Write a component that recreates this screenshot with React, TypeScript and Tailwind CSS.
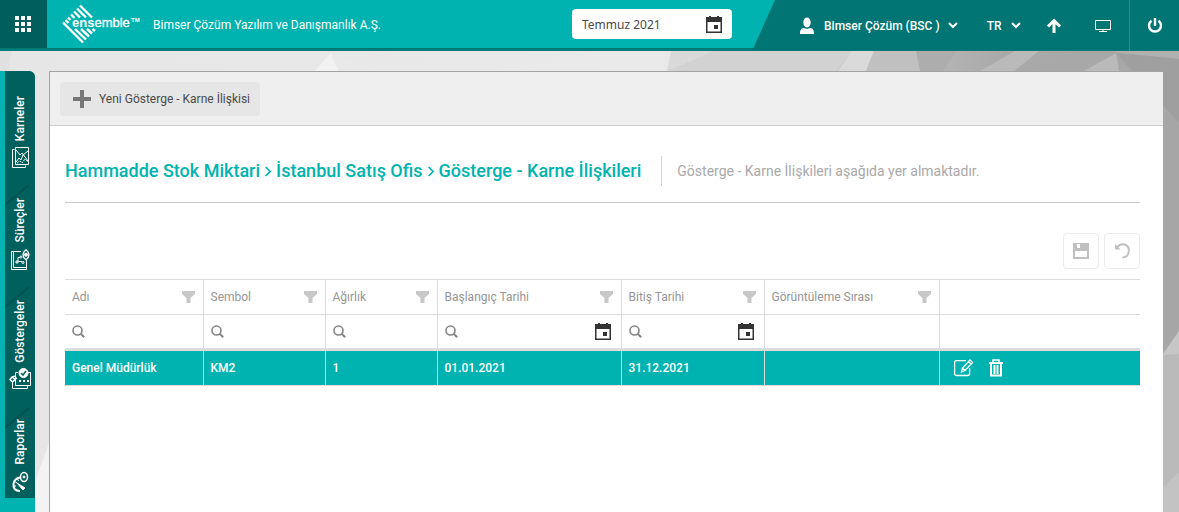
import { useState } from 'react';
import type { ReactNode } from 'react';

const COLUMNS = [
  { key: 'name', label: 'Adı', width: 'w-[138px]', search: true, date: false },
  { key: 'symbol', label: 'Sembol', width: 'w-[122px]', search: true, date: false },
  { key: 'weight', label: 'Ağırlık', width: 'w-[112px]', search: true, date: false },
  { key: 'start', label: 'Başlangıç Tarihi', width: 'w-[184px]', search: true, date: true },
  { key: 'end', label: 'Bitiş Tarihi', width: 'w-[143px]', search: true, date: true },
  { key: 'order', label: 'Görüntüleme Sırası', width: 'w-[175px]', search: false, date: false },
];

const ROWS: Record<string, string>[] = [
  { name: 'Genel Müdürlük', symbol: 'KM2', weight: '1', start: '01.01.2021', end: '31.12.2021', order: '' },
];

function Backdrop() {
  return (
    <svg
      className="absolute inset-0 h-full w-full"
      viewBox="0 0 1179 512"
      preserveAspectRatio="none"
      aria-hidden="true"
    >
      <defs>
        <linearGradient id="bg" x1="0" x2="1" y1="0" y2="0">
          <stop offset="0" stopColor="#e6e6e6" />
          <stop offset="0.56" stopColor="#eaeaea" />
          <stop offset="0.68" stopColor="#cfcfcf" />
          <stop offset="0.85" stopColor="#a9a9a9" />
          <stop offset="1" stopColor="#a6a6a6" />
        </linearGradient>
      </defs>
      <rect width="1179" height="512" fill="url(#bg)" />
      <path d="M0 51h12L0 110z" fill="#e0e0e0" />
      <path d="M331 53l-18 20h26z" fill="#f2f2f2" />
      <path d="M331 53l8 20h48z" fill="#e9e9e9" />
      <path d="M671 51h42l-46 20z" fill="#d9d9d9" />
      <path d="M713 51h140l-17 20H667z" fill="#d2d2d2" />
      <path d="M852 51h22l-8 20h-28z" fill="#dadada" />
      <path d="M874 51h42l4 20h-54z" fill="#c0c0c0" />
      <path d="M916 51h41l-14 20h-23z" fill="#adadad" />
      <path d="M1015 51h24l-25 20h-34z" fill="#bababa" />
      <path d="M1116 53l-32 18h35z" fill="#bababa" />
      <path d="M1116 51h63v8l-63-6z" fill="#b0b0b0" />
      <path d="M1116 53l63 6v64z" fill="#9f9f9f" />
      <path d="M1179 331l-16 22v159h16z" fill="#bababa" />
      <path d="M1179 331l-16 24 16-1z" fill="#c6c6c6" />
      <path d="M1179 472l-16 15v25h16z" fill="#c3c3c3" />
      <path d="M50 440l-15 42v30h15z" fill="#f3f3f3" />
    </svg>
  );
}

function Logo() {
  return (
    <svg width="78" height="40" viewBox="0 0 78 40" role="img" aria-label="ensemble">
      <g stroke="#fff" strokeWidth="2.400" fill="none">
        <path d="M18 1.500l12 12M15 4.500l9 9M12 7.500l6 6M9 10.500l3.500 3.500M6 13.500l2.500 2.500M3.500 16l3 3M1 18.500l20 20" />
        <path d="M13 25l11 10.500M19 25l8 7.500M25 25l5 4.500M30.500 25l2.500 2" />
      </g>
      <text x="10" y="23" fill="#fff" fontFamily="Liberation Sans, Arial, sans-serif" fontSize="13" fontWeight="700">
        ens
        <tspan fontWeight="400" stroke="#fff" strokeWidth="0.300">emble</tspan>
      </text>
      <text x="69" y="18" fill="#fff" fontFamily="Liberation Sans, Arial, sans-serif" fontSize="6" fontWeight="700">TM</text>
    </svg>
  );
}

function CalendarIcon() {
  return (
    <svg width="16" height="17" viewBox="0 0 16 17" fill="#333">
      <path fillRule="evenodd" d="M0 1h3V0h2v1h6V0h2v1h3v16H0zM1.500 6v9.500h13V6z" />
      <path d="M8 9h4v4H8z" />
    </svg>
  );
}

function SearchIcon() {
  return (
    <svg width="13" height="13" viewBox="0 0 13 13" fill="none" stroke="#858585">
      <circle cx="5.500" cy="5.500" r="4.500" strokeWidth="1.600" />
      <path d="M8.700 8.700l3.500 3.500" strokeWidth="2" />
    </svg>
  );
}

function FilterIcon() {
  return (
    <svg width="13" height="12" viewBox="0 0 13 12" fill="#c8c8c8">
      <path d="M0 0h13v3L8.500 7v5h-4V7L0 3z" />
    </svg>
  );
}

function ChevronIcon() {
  return (
    <svg width="10" height="7" viewBox="0 0 10 7" fill="none" stroke="#fff" strokeWidth="2">
      <path d="M1 1l4 4 4-4" />
    </svg>
  );
}

function CrumbArrow() {
  return (
    <svg className="mx-[5px]" width="6" height="11" viewBox="0 0 6 11" fill="none" stroke="#00b3b0" strokeWidth="1.700">
      <path d="M.7 1L5 5.500.7 10" />
    </svg>
  );
}

function CardsIcon() {
  return (
    <svg width="17" height="21" viewBox="0 0 17 21" fill="none" stroke="#fff">
      <path d="M3.500.5h13v17h-13zM2.500 2.500h-2v18h13v-2" />
      <path d="M4 15l3-4 2 2 2-5 5-4M4 3l4 5 2-2 6 8" />
      <path d="M5 16l3-2 2 2 3-4 3 3" strokeDasharray="2 1" />
    </svg>
  );
}

function ProcessIcon() {
  return (
    <svg width="19" height="21" viewBox="0 0 19 21" fill="none" stroke="#fff">
      <path d="M10 2.500H.5v18h15V11M2.500 2v16.500H15" />
      <path d="M7 12.500V8.500h2M7.500 12.500H11M5 12h2v2H5z" />
      <circle cx="10" cy="8" r="1" />
      <circle cx="12" cy="13.500" r="1" />
      <path d="M15 .7c2 1.500 3 3 3 5s-1 3.500-3 5c-2-1.500-3-3-3-5s1-3.500 3-5z" strokeWidth="1.300" />
      <circle cx="15" cy="5.700" r="1.500" fill="#fff" />
    </svg>
  );
}

function IndicatorIcon() {
  return (
    <svg width="22" height="21" viewBox="0 0 22 21" fill="none" stroke="#fff">
      <path d="M9 4.500H6.500v13h15v-13h-3M3.500 13v7.500h15v-3" />
      <circle cx="14.500" cy="5" r="4.500" fill="#fff" />
      <path d="M12 5l2 2 3-4" stroke="#00605d" strokeWidth="1.500" />
      <path d="M1 11.500l2-2.500 3 2.500-2.500 2.500zM3 9l4-1M6 11l2-1" strokeWidth="1.500" />
      <path d="M10 13h10" strokeWidth="2" strokeDasharray="2 2" />
    </svg>
  );
}

function ReportIcon() {
  return (
    <svg width="17" height="21" viewBox="0 0 17 21" fill="none" stroke="#fff">
      <path d="M8 20C3 20 1 17 1.500 13S5 7 8 6.500" strokeWidth="2" />
      <path d="M2 10l3 2M1 15h3M5 7l1.500 3" />
      <path d="M5 12l8 5-2 2z" fill="#fff" />
      <ellipse cx="12" cy="6" rx="3.500" ry="4.500" strokeWidth="1.500" />
      <circle cx="12" cy="6" r="1" fill="#fff" />
    </svg>
  );
}

const TABS: { label: string; icon: ReactNode }[] = [
  { label: 'Karneler', icon: <CardsIcon /> },
  { label: 'Süreçler', icon: <ProcessIcon /> },
  { label: 'Göstergeler', icon: <IndicatorIcon /> },
  { label: 'Raporlar', icon: <ReportIcon /> },
];

function Header() {
  const [period, setPeriod] = useState('Temmuz 2021');

  return (
    <header className="relative flex h-[51px] border-b-[3px] border-[#007a77] bg-[#00b3b0] text-xs text-white">
      <button type="button" aria-label="Menü" className="flex w-[47px] items-center justify-center bg-[#005f5c]">
        <svg width="17" height="17" viewBox="0 0 17 17" fill="#fff">
          <path d="M0 0h4v4H0zM6 0h4v4H6zM12 0h4v4h-4zM0 6h4v4H0zM6 6h4v4H6zM12 6h4v4h-4zM0 12h4v4H0zM6 12h4v4H6zM12 12h4v4h-4z" />
        </svg>
      </button>
      <div className="flex flex-1 items-center pl-[15px]">
        <Logo />
        <span className="ml-[13px] pt-[2px]">Bimser Çözüm Yazılım ve Danışmanlık A.Ş.</span>
      </div>
      <div className="my-auto mr-5 flex h-[30px] w-40 items-center rounded-sm bg-white px-[10px]">
        <input
          aria-label="Dönem"
          value={period}
          onChange={(e) => setPeriod(e.target.value)}
          className="min-w-0 flex-1 pt-px font-['Noto_Sans',sans-serif] text-xs text-[#4a4a4a] outline-none"
        />
        <button type="button" aria-label="Takvim">
          <CalendarIcon />
        </button>
      </div>
      <div className="-mb-[3px] flex w-[427px] bg-[#007573] [clip-path:polygon(23px_0,100%_0,100%_100%,0_100%)]">
        <button type="button" className="ml-12 flex items-center text-xs font-medium">
          <svg width="14" height="18" viewBox="0 0 14 18" fill="#fff">
            <ellipse cx="7" cy="5.500" rx="3.700" ry="5" />
            <path d="M0 17c0-4 1-6 4-6l3 1 3-1c3 0 4 2 4 6z" />
          </svg>
          <span className="mr-2 ml-[10px]">Bimser Çözüm (BSC )</span>
          <ChevronIcon />
        </button>
        <button type="button" className="ml-[29px] flex items-center gap-[9px] text-xs font-medium">
          TR
          <ChevronIcon />
        </button>
        <button type="button" aria-label="Yukarı" className="ml-[25px]">
          <svg width="16" height="16" viewBox="0 0 16 16" fill="none" stroke="#fff" strokeWidth="3">
            <path d="M8 15V2M2 8.500L8 2.500l6 6" />
          </svg>
        </button>
        <button type="button" aria-label="Ekran" className="ml-[33px]">
          <svg width="16" height="14" viewBox="0 0 16 14" fill="none" stroke="#fff">
            <path d="M.5 1.500h15v9H.5zM8 10.500v2M4 12.500h8" />
          </svg>
        </button>
        <button type="button" aria-label="Çıkış" className="ml-auto flex w-[50px] items-center justify-center border-l border-[#00a19e]">
          <svg width="16" height="16" viewBox="0 0 16 16" fill="none" stroke="#fff" strokeWidth="2.400">
            <path d="M8 0v8M4.500 2.700a6 6 0 1 0 7 0" />
          </svg>
        </button>
      </div>
    </header>
  );
}

function SideTabs() {
  return (
    <nav className="flex w-[35px] flex-col rounded-tr-md bg-[#00b3b0] pl-[5px]">
      <div className="relative flex flex-col items-center gap-[30px] rounded-tr-md bg-[#00605d] pt-[25px] pb-[6px]">
        <svg className="absolute inset-0 h-full w-full" viewBox="0 0 30 427" fill="none" stroke="#005350" strokeWidth="2" aria-hidden="true">
          <path d="M0 134l24-20M0 236l24-20M0 357l24-20" />
        </svg>
        {TABS.map((tab) => (
          <button key={tab.label} type="button" className="relative flex flex-col items-center gap-[6px]">
            <span className="rotate-180 text-xs leading-4 font-medium text-white [writing-mode:vertical-rl]">
              {tab.label}
            </span>
            {tab.icon}
          </button>
        ))}
      </div>
    </nav>
  );
}

function IndicatorTable() {
  const [filters, setFilters] = useState<Record<string, string>>({});

  return (
    <table className="mt-[10px] w-full table-fixed border-collapse text-left text-xs">
      <thead>
        <tr className="h-[35px] border-y border-[#dcdcdc] text-[#959595]">
          {COLUMNS.map((col) => (
            <th key={col.key} className={`${col.width} border-r border-[#dcdcdc] py-0 pr-2 pl-[7px] font-normal`}>
              <div className="flex items-center justify-between">
                {col.label}
                <button type="button" aria-label={`${col.label} filtrele`}>
                  <FilterIcon />
                </button>
              </div>
            </th>
          ))}
          <th aria-label="İşlemler" />
        </tr>
        <tr className="h-[35px] border-b-[3px] border-[#dcdcdc]">
          {COLUMNS.map((col) => (
            <td key={col.key} className="border-r border-[#dcdcdc] py-0 pr-2 pl-[7px]">
              {col.search && (
                <div className="flex items-center gap-1">
                  <SearchIcon />
                  <input
                    aria-label={`${col.label} ara`}
                    value={filters[col.key] ?? ''}
                    onChange={(e) => setFilters({ ...filters, [col.key]: e.target.value })}
                    className="h-5 min-w-0 flex-1 outline-none"
                  />
                  {col.date && (
                    <button type="button" aria-label={`${col.label} seç`} className="mr-[2px]">
                      <CalendarIcon />
                    </button>
                  )}
                </div>
              )}
            </td>
          ))}
          <td />
        </tr>
      </thead>
      <tbody>
        {ROWS.map((row) => (
          <tr key={row.name} className="h-9 border-b border-[#dcdcdc] bg-[#00b3b0] font-medium text-white">
            {COLUMNS.map((col) => (
              <td key={col.key} className="border-r border-[#dcdcdc] px-[7px] py-0">
                {row[col.key]}
              </td>
            ))}
            <td className="py-0 pl-[14px]">
              <div className="flex items-center gap-4">
                <button type="button" aria-label="Düzenle">
                  <svg width="19" height="18" viewBox="0 0 19 18" fill="none" stroke="#fff" strokeWidth="1.300">
                    <path d="M12 1.600H2.500Q.6 1.600.6 3.500v11q0 2 2 2h11q2 0 2-2V9" />
                    <path d="M7.500 13l1-4L16 1l2.500 2.500-7.500 8zM14.500 2.500L17 5M8.500 9l2.500 2.500" />
                  </svg>
                </button>
                <button type="button" aria-label="Sil">
                  <svg width="14" height="18" viewBox="0 0 14 18" fill="none" stroke="#fff">
                    <path d="M4 3V1h6v2" strokeWidth="1.500" />
                    <path d="M0 4h14" strokeWidth="2" />
                    <path d="M2 5v11.500h10V5M5.500 6v9M8.500 6v9" strokeWidth="2" />
                  </svg>
                </button>
              </div>
            </td>
          </tr>
        ))}
      </tbody>
    </table>
  );
}

function App() {
  return (
    <div className="relative isolate flex min-h-screen flex-col font-[Roboto,sans-serif]">
      <div className="absolute inset-0 -z-10">
        <Backdrop />
      </div>
      <Header />
      <div className="mt-5 flex flex-1">
        <SideTabs />
        <main className="mr-4 ml-[14px] flex-1 border-t border-l border-[#a3a3a3] bg-white">
          <div className="flex h-[54px] items-center border-b border-[#cfcfcf] bg-[#efefef] pl-[10px]">
            <button type="button" className="flex h-[34px] w-[200px] items-center rounded bg-[#e6e6e6] pl-[13px] text-xs text-[#4a4a4a]">
              <svg width="18" height="18" viewBox="0 0 18 18" stroke="#777" strokeWidth="4">
                <path d="M9 0v18M0 9h18" />
              </svg>
              <span className="ml-2">Yeni Gösterge - Karne İlişkisi</span>
            </button>
          </div>
          <div className="pr-[23px] pl-[15px]">
            <div className="flex h-[77px] items-center border-b border-[#c8c8c8] pt-[14px]">
              <h1 className="flex items-center text-lg font-medium whitespace-nowrap text-[#00b3b0]">
                Hammadde Stok Miktari
                <CrumbArrow />
                İstanbul Satış Ofis
                <CrumbArrow />
                Gösterge - Karne İlişkileri
              </h1>
              <p className="ml-5 border-l border-[#d4d4d4] pl-[15px] text-sm leading-[30px] whitespace-nowrap text-[#a9a9a9]">
                Gösterge - Karne İlişkileri aşağıda yer almaktadır.
              </p>
            </div>
            <div className="mt-[30px] flex justify-end gap-[5px]">
              <button type="button" aria-label="Kaydet" className="flex size-9 items-center justify-center rounded border border-[#ebebeb]">
                <svg width="16" height="16" viewBox="0 0 16 16" fill="#c0c0c0">
                  <path fillRule="evenodd" d="M0 0h16v16H0zM4 1v4h3V1zM2 8v6h12V8z" />
                </svg>
              </button>
              <button type="button" aria-label="Geri al" className="flex size-9 items-center justify-center rounded border border-[#ebebeb]">
                <svg width="15" height="16" viewBox="0 0 15 16" fill="none" stroke="#c0c0c0" strokeWidth="2">
                  <path d="M2 4.500C4 1.500 7 .8 9.500 1.500c3 .8 4.500 3.500 4.300 6.500-.2 4-3 6.500-6.300 6.500" />
                  <path d="M0 1v5.500h5.500z" fill="#c0c0c0" stroke="none" />
                </svg>
              </button>
            </div>
            <IndicatorTable />
          </div>
        </main>
      </div>
    </div>
  );
}

export default App;
